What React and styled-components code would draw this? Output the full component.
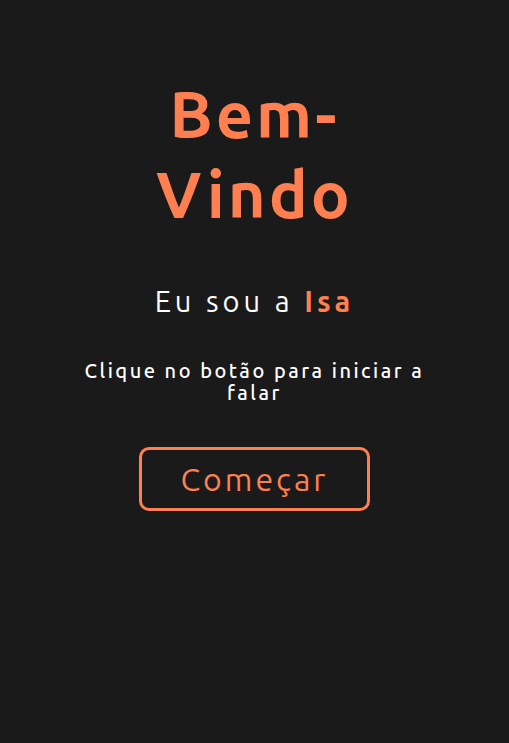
import React from "react";
import styled, { createGlobalStyle } from "styled-components";

const GlobalStyle = createGlobalStyle`
  html, body {
    margin: 0;
    padding: 0;
    background: #1a1a1a;
  }
  body {
    font-family: "Trebuchet MS", "Ubuntu", "Open Sans", sans-serif;
    color: #ffffff;
  }
`;

const Page = styled.main`
  min-height: 743px;
  box-sizing: border-box;
  padding: 74px 80px 40px;
  display: flex;
  flex-direction: column;
  align-items: center;
  text-align: center;
`;

const Title = styled.h1`
  margin: 0;
  font-size: 65px;
  line-height: 80px;
  letter-spacing: 3px;
  font-weight: 700;
  color: #ff7f50;
`;

const Intro = styled.h2`
  margin: 50px 0 0;
  font-size: 29px;
  font-weight: 400;
  letter-spacing: 4px;
  line-height: 34px;
`;

const Name = styled.span`
  color: #ff7f50;
  font-weight: 700;
`;

const Hint = styled.p`
  margin: 42px 0 0;
  font-size: 20px;
  line-height: 22px;
  letter-spacing: 2.5px;
  font-weight: 500;
`;

const StartButton = styled.button`
  margin-top: 43px;
  width: 231px;
  height: 64px;
  background: transparent;
  border: 3px solid #ff7f50;
  border-radius: 10px;
  color: #ff7f50;
  font-family: inherit;
  font-size: 32px;
  letter-spacing: 3px;
  cursor: pointer;
`;

export default function App() {
  return (
    <>
      <GlobalStyle />
      <Page>
        <Title>Bem-Vindo</Title>
        <Intro>
          Eu sou a <Name>Isa</Name>
        </Intro>
        <Hint>Clique no botão para iniciar a falar</Hint>
        <StartButton>Começar</StartButton>
      </Page>
    </>
  );
}
